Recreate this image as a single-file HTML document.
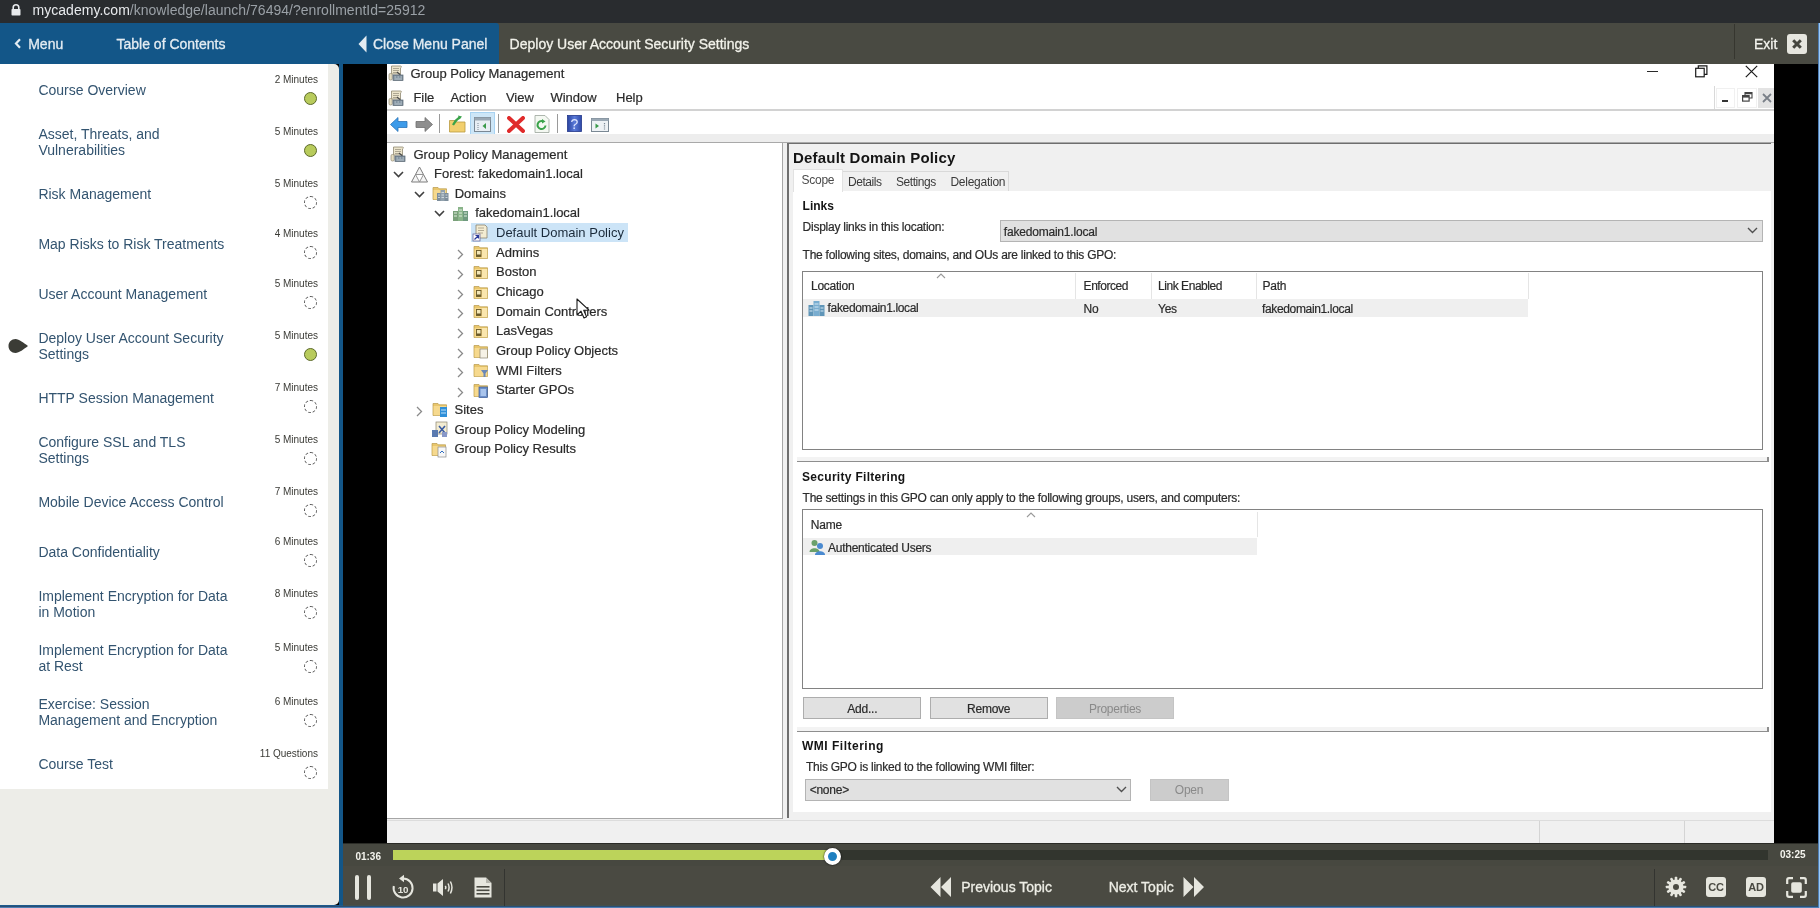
<!DOCTYPE html>
<html><head><meta charset="utf-8"><title>mycademy</title>
<style>
html,body{margin:0;padding:0;width:1820px;height:908px;overflow:hidden;background:#000;font-family:"Liberation Sans", sans-serif}
body{position:relative}
</style></head><body>
<div id="root" style="position:absolute;left:0;top:0;width:1820px;height:908px;overflow:hidden;will-change:transform">
<div style="position:absolute;left:0px;top:0px;width:1820px;height:23px;background:#292c2f"></div><svg style="position:absolute;left:11px;top:4px" width="10" height="12" viewBox="0 0 10 12"><path d="M2.2 5V3.6a2.8 2.8 0 0 1 5.6 0V5" fill="none" stroke="#e8eaed" stroke-width="1.6"/><rect x="0.5" y="5" width="9" height="6.5" rx="0.8" fill="#e8eaed"/></svg><div style="position:absolute;left:32.6px;top:2.65px;font-size:14px;line-height:14px;color:#e8eaed;font-weight:400;white-space:nowrap;letter-spacing:0.02px"><span style="color:#e8eaed">mycademy.com</span><span style="color:#9aa0a6">/knowledge/launch/76494/?enrollmentId=25912</span></div><div style="position:absolute;left:0px;top:23px;width:1818px;height:41px;background:#494a42"></div><div style="position:absolute;left:0px;top:23px;width:499px;height:41px;background:#135688;border-top-right-radius:3px"></div><div style="position:absolute;left:1818px;top:23px;width:1px;height:885px;background:#4f7fb6"></div><div style="position:absolute;left:1819px;top:23px;width:1px;height:885px;background:#9dcaf6"></div><svg style="position:absolute;left:14px;top:38px" width="8" height="11" viewBox="0 0 8 11"><path d="M6 1.2 L2 5.5 L6 9.8" fill="none" stroke="#e4ecf2" stroke-width="2.2"/></svg><div style="position:absolute;left:28.2px;top:36.95px;font-size:14px;line-height:14px;color:#e4ecf2;font-weight:400;white-space:nowrap;-webkit-text-stroke:0.3px currentColor">Menu</div><div style="position:absolute;left:116.5px;top:36.95px;font-size:14px;line-height:14px;color:#e4ecf2;font-weight:400;white-space:nowrap;-webkit-text-stroke:0.3px currentColor">Table of Contents</div><svg style="position:absolute;left:358px;top:35px" width="9" height="18" viewBox="0 0 9 18"><path d="M8.5 0.5 L0.5 9 L8.5 17.5 Z" fill="#e4ecf2"/></svg><div style="position:absolute;left:373px;top:36.95px;font-size:14px;line-height:14px;color:#e4ecf2;font-weight:400;white-space:nowrap;-webkit-text-stroke:0.3px currentColor">Close Menu Panel</div><div style="position:absolute;left:509.6px;top:36.95px;font-size:14px;line-height:14px;color:#f2f2ea;font-weight:400;white-space:nowrap;-webkit-text-stroke:0.3px currentColor">Deploy User Account Security Settings</div><div style="position:absolute;left:1734px;top:24px;width:1px;height:35px;background:#36362f"></div><div style="position:absolute;left:1754px;top:37.05px;font-size:14px;line-height:14px;color:#f4f4ee;font-weight:400;white-space:nowrap;-webkit-text-stroke:0.3px currentColor">Exit</div><div style="position:absolute;left:1787px;top:34px;width:20px;height:20px;background:#e6e6df;border-radius:3px"></div><svg style="position:absolute;left:1791px;top:38px" width="12" height="12" viewBox="0 0 12 12"><path d="M2.2 2.2 L9.8 9.8 M9.8 2.2 L2.2 9.8" stroke="#45463e" stroke-width="3" stroke-linecap="butt"/></svg><div style="position:absolute;left:0px;top:64px;width:339px;height:841px;background:#edede8;border-top-right-radius:5px;border-bottom-right-radius:5px"></div><div style="position:absolute;left:0px;top:64px;width:328px;height:725px;background:#ffffff"></div><div style="position:absolute;left:339px;top:64px;width:4px;height:844px;background:#135688"></div><div style="position:absolute;left:0px;top:905px;width:343px;height:1px;background:#1d5a8c"></div><div style="position:absolute;left:0px;top:906px;width:343px;height:1px;background:#2a4e74"></div><div style="position:absolute;left:0px;top:907px;width:343px;height:1px;background:#4e7fb3"></div><div style="position:absolute;right:1502px;top:75.14px;font-size:10px;line-height:10px;color:#3b3b36;white-space:nowrap">2 Minutes</div><div style="position:absolute;left:38.4px;top:82.95px;font-size:14px;line-height:14px;color:#335470;font-weight:400;white-space:nowrap;">Course Overview</div><div style="position:absolute;left:304px;top:92.0px;width:11px;height:11px;background:#b8cb5c;border:1px solid #5d6a2c;border-radius:50%"></div><div style="position:absolute;right:1502px;top:127.33px;font-size:10px;line-height:10px;color:#3b3b36;white-space:nowrap">5 Minutes</div><div style="position:absolute;left:38.4px;top:127.05px;font-size:14px;line-height:14px;color:#335470;font-weight:400;white-space:nowrap;">Asset, Threats, and</div><div style="position:absolute;left:38.4px;top:142.95px;font-size:14px;line-height:14px;color:#335470;font-weight:400;white-space:nowrap;">Vulnerabilities</div><div style="position:absolute;left:304px;top:144.2px;width:11px;height:11px;background:#b8cb5c;border:1px solid #5d6a2c;border-radius:50%"></div><div style="position:absolute;right:1502px;top:179.23px;font-size:10px;line-height:10px;color:#3b3b36;white-space:nowrap">5 Minutes</div><div style="position:absolute;left:38.4px;top:187.05px;font-size:14px;line-height:14px;color:#335470;font-weight:400;white-space:nowrap;">Risk Management</div><div style="position:absolute;left:304px;top:196.1px;width:11px;height:11px;border:1px dashed #555;border-radius:50%"></div><div style="position:absolute;right:1502px;top:229.33px;font-size:10px;line-height:10px;color:#3b3b36;white-space:nowrap">4 Minutes</div><div style="position:absolute;left:38.4px;top:237.15px;font-size:14px;line-height:14px;color:#335470;font-weight:400;white-space:nowrap;">Map Risks to Risk Treatments</div><div style="position:absolute;left:304px;top:246.2px;width:11px;height:11px;border:1px dashed #555;border-radius:50%"></div><div style="position:absolute;right:1502px;top:279.34px;font-size:10px;line-height:10px;color:#3b3b36;white-space:nowrap">5 Minutes</div><div style="position:absolute;left:38.4px;top:287.15px;font-size:14px;line-height:14px;color:#335470;font-weight:400;white-space:nowrap;">User Account Management</div><div style="position:absolute;left:304px;top:296.20000000000005px;width:11px;height:11px;border:1px dashed #555;border-radius:50%"></div><div style="position:absolute;right:1502px;top:331.34px;font-size:10px;line-height:10px;color:#3b3b36;white-space:nowrap">5 Minutes</div><div style="position:absolute;left:38.4px;top:331.05px;font-size:14px;line-height:14px;color:#335470;font-weight:400;white-space:nowrap;">Deploy User Account Security</div><div style="position:absolute;left:38.4px;top:346.95px;font-size:14px;line-height:14px;color:#335470;font-weight:400;white-space:nowrap;">Settings</div><div style="position:absolute;left:304px;top:348.20000000000005px;width:11px;height:11px;background:#b8cb5c;border:1px solid #5d6a2c;border-radius:50%"></div><div style="position:absolute;right:1502px;top:383.44px;font-size:10px;line-height:10px;color:#3b3b36;white-space:nowrap">7 Minutes</div><div style="position:absolute;left:38.4px;top:391.25px;font-size:14px;line-height:14px;color:#335470;font-weight:400;white-space:nowrap;">HTTP Session Management</div><div style="position:absolute;left:304px;top:400.3px;width:11px;height:11px;border:1px dashed #555;border-radius:50%"></div><div style="position:absolute;right:1502px;top:435.13px;font-size:10px;line-height:10px;color:#3b3b36;white-space:nowrap">5 Minutes</div><div style="position:absolute;left:38.4px;top:434.85px;font-size:14px;line-height:14px;color:#335470;font-weight:400;white-space:nowrap;">Configure SSL and TLS</div><div style="position:absolute;left:38.4px;top:450.75px;font-size:14px;line-height:14px;color:#335470;font-weight:400;white-space:nowrap;">Settings</div><div style="position:absolute;left:304px;top:452.0px;width:11px;height:11px;border:1px dashed #555;border-radius:50%"></div><div style="position:absolute;right:1502px;top:487.04px;font-size:10px;line-height:10px;color:#3b3b36;white-space:nowrap">7 Minutes</div><div style="position:absolute;left:38.4px;top:494.85px;font-size:14px;line-height:14px;color:#335470;font-weight:400;white-space:nowrap;">Mobile Device Access Control</div><div style="position:absolute;left:304px;top:503.90000000000003px;width:11px;height:11px;border:1px dashed #555;border-radius:50%"></div><div style="position:absolute;right:1502px;top:537.34px;font-size:10px;line-height:10px;color:#3b3b36;white-space:nowrap">6 Minutes</div><div style="position:absolute;left:38.4px;top:545.15px;font-size:14px;line-height:14px;color:#335470;font-weight:400;white-space:nowrap;">Data Confidentiality</div><div style="position:absolute;left:304px;top:554.2px;width:11px;height:11px;border:1px dashed #555;border-radius:50%"></div><div style="position:absolute;right:1502px;top:589.34px;font-size:10px;line-height:10px;color:#3b3b36;white-space:nowrap">8 Minutes</div><div style="position:absolute;left:38.4px;top:589.05px;font-size:14px;line-height:14px;color:#335470;font-weight:400;white-space:nowrap;">Implement Encryption for Data</div><div style="position:absolute;left:38.4px;top:604.95px;font-size:14px;line-height:14px;color:#335470;font-weight:400;white-space:nowrap;">in Motion</div><div style="position:absolute;left:304px;top:606.2px;width:11px;height:11px;border:1px dashed #555;border-radius:50%"></div><div style="position:absolute;right:1502px;top:643.24px;font-size:10px;line-height:10px;color:#3b3b36;white-space:nowrap">5 Minutes</div><div style="position:absolute;left:38.4px;top:642.95px;font-size:14px;line-height:14px;color:#335470;font-weight:400;white-space:nowrap;">Implement Encryption for Data</div><div style="position:absolute;left:38.4px;top:658.85px;font-size:14px;line-height:14px;color:#335470;font-weight:400;white-space:nowrap;">at Rest</div><div style="position:absolute;left:304px;top:660.1px;width:11px;height:11px;border:1px dashed #555;border-radius:50%"></div><div style="position:absolute;right:1502px;top:697.24px;font-size:10px;line-height:10px;color:#3b3b36;white-space:nowrap">6 Minutes</div><div style="position:absolute;left:38.4px;top:696.95px;font-size:14px;line-height:14px;color:#335470;font-weight:400;white-space:nowrap;">Exercise: Session</div><div style="position:absolute;left:38.4px;top:712.85px;font-size:14px;line-height:14px;color:#335470;font-weight:400;white-space:nowrap;">Management and Encryption</div><div style="position:absolute;left:304px;top:714.1px;width:11px;height:11px;border:1px dashed #555;border-radius:50%"></div><div style="position:absolute;right:1502px;top:749.24px;font-size:10px;line-height:10px;color:#3b3b36;white-space:nowrap">11 Questions</div><div style="position:absolute;left:38.4px;top:757.05px;font-size:14px;line-height:14px;color:#335470;font-weight:400;white-space:nowrap;">Course Test</div><div style="position:absolute;left:304px;top:766.1px;width:11px;height:11px;border:1px dashed #555;border-radius:50%"></div><svg style="position:absolute;left:8px;top:338px" width="21" height="16" viewBox="0 0 21 16"><path d="M7.5 1 C3.5 1 0.5 4 0.5 8 C0.5 12 3.5 15 7.5 15 C11 15 16 11 20 8 C16 5 11 1 7.5 1 Z" fill="#3b3c36"/></svg><div style="position:absolute;left:343px;top:64px;width:1475px;height:779px;background:#000"></div><div style="position:absolute;left:387px;top:64px;width:1387px;height:779px;background:#ffffff"></div><svg style="position:absolute;left:388px;top:65px" width="16" height="16" viewBox="0 0 16 16"><path d="M3.5 1 H12.5 C13.5 1 13.8 2 13 2.6 L12.5 3 V9 H3.5 Z" fill="#ece5cc" stroke="#8f8872" stroke-width="0.8"/><path d="M5 3.5 H11 M5 5.5 H11 M5 7.5 H10" stroke="#9d9683" stroke-width="0.8"/><rect x="1" y="8.5" width="3.2" height="6.5" rx="1.3" fill="#e6dec2" stroke="#8f8872" stroke-width="0.7"/><path d="M9 7 L12.5 10" stroke="#4a4a4a" stroke-width="1.3"/><rect x="5" y="10" width="10" height="5.5" fill="#8393a0" stroke="#55636e" stroke-width="0.7"/><path d="M6.5 12 H8 M9.5 12 H11 M12.5 12 H14 M6.5 14 H14" stroke="#c9d3da" stroke-width="0.8"/></svg><div style="position:absolute;left:410.5px;top:66.90px;font-size:13px;line-height:13px;color:#2b2b2b;font-weight:400;white-space:nowrap;;-webkit-text-stroke:0.2px currentColor">Group Policy Management</div><div style="position:absolute;left:1647px;top:71px;width:11px;height:1.3px;background:#2a2a2a"></div><svg style="position:absolute;left:1695px;top:65px" width="13" height="13" viewBox="0 0 13 13"><rect x="0.7" y="3.3" width="8.5" height="8.5" fill="none" stroke="#1a1a1a" stroke-width="1.2"/><path d="M3.3 3.3 V0.8 H11.9 V9.3 H9.2" fill="none" stroke="#1a1a1a" stroke-width="1.2"/></svg><svg style="position:absolute;left:1745px;top:65px" width="13" height="13" viewBox="0 0 13 13"><path d="M0.8 0.8 L12.2 12.2 M12.2 0.8 L0.8 12.2" stroke="#1a1a1a" stroke-width="1.2"/></svg><svg style="position:absolute;left:388px;top:90px" width="16" height="16" viewBox="0 0 16 16"><path d="M3.5 1 H12.5 C13.5 1 13.8 2 13 2.6 L12.5 3 V9 H3.5 Z" fill="#ece5cc" stroke="#8f8872" stroke-width="0.8"/><path d="M5 3.5 H11 M5 5.5 H11 M5 7.5 H10" stroke="#9d9683" stroke-width="0.8"/><rect x="1" y="8.5" width="3.2" height="6.5" rx="1.3" fill="#e6dec2" stroke="#8f8872" stroke-width="0.7"/><path d="M9 7 L12.5 10" stroke="#4a4a4a" stroke-width="1.3"/><rect x="5" y="10" width="10" height="5.5" fill="#8393a0" stroke="#55636e" stroke-width="0.7"/><path d="M6.5 12 H8 M9.5 12 H11 M12.5 12 H14 M6.5 14 H14" stroke="#c9d3da" stroke-width="0.8"/></svg><div style="position:absolute;left:413.4px;top:90.60px;font-size:13px;line-height:13px;color:#2b2b2b;font-weight:400;white-space:nowrap;;-webkit-text-stroke:0.2px currentColor">File</div><div style="position:absolute;left:450.4px;top:90.60px;font-size:13px;line-height:13px;color:#2b2b2b;font-weight:400;white-space:nowrap;;-webkit-text-stroke:0.2px currentColor">Action</div><div style="position:absolute;left:505.9px;top:90.60px;font-size:13px;line-height:13px;color:#2b2b2b;font-weight:400;white-space:nowrap;;-webkit-text-stroke:0.2px currentColor">View</div><div style="position:absolute;left:550.4px;top:90.60px;font-size:13px;line-height:13px;color:#2b2b2b;font-weight:400;white-space:nowrap;;-webkit-text-stroke:0.2px currentColor">Window</div><div style="position:absolute;left:616px;top:90.60px;font-size:13px;line-height:13px;color:#2b2b2b;font-weight:400;white-space:nowrap;;-webkit-text-stroke:0.2px currentColor">Help</div><div style="position:absolute;left:1714px;top:86px;width:1px;height:24px;background:#d9d9d9"></div><div style="position:absolute;left:1716px;top:88px;width:19px;height:20px;background:#ffffff;border:1px solid #f0f0f0;box-sizing:border-box"></div><div style="position:absolute;left:1722px;top:100px;width:6px;height:2px;background:#333"></div><div style="position:absolute;left:1737px;top:88px;width:20px;height:20px;background:#ffffff;border:1px solid #f0f0f0;box-sizing:border-box"></div><svg style="position:absolute;left:1742px;top:92px" width="11" height="10" viewBox="0 0 11 10"><rect x="0.6" y="3.6" width="6.5" height="5.5" fill="none" stroke="#444" stroke-width="1.2"/><path d="M0.6 4.8 H7.1" stroke="#444" stroke-width="1.6"/><path d="M3 3.6 V0.6 H10 V6 H7.1 M3 1.8 H10" fill="none" stroke="#444" stroke-width="1.1"/></svg><div style="position:absolute;left:1758px;top:88px;width:16px;height:20px;background:#e3e3e3"></div><svg style="position:absolute;left:1762px;top:93px" width="10" height="10" viewBox="0 0 10 10"><path d="M1 1 L9 9 M9 1 L1 9" stroke="#7a8088" stroke-width="1.8"/></svg><div style="position:absolute;left:387px;top:109px;width:1387px;height:2px;background:#d2d2d2"></div><div style="position:absolute;left:387px;top:111px;width:1387px;height:23px;background:#ffffff"></div><svg style="position:absolute;left:390px;top:116px" width="18" height="17" viewBox="0 0 18 17"><path d="M0.5 8.5 L8 1.5 V5.5 H17 V11.5 H8 V15.5 Z" fill="#3d9be9" stroke="#2a74b8" stroke-width="0.8"/></svg><svg style="position:absolute;left:414px;top:116px" width="19" height="17" viewBox="0 0 19 17"><path d="M18.5 8.5 L11 1.5 V5.5 H2 V11.5 H11 V15.5 Z" fill="#8e8e8e" stroke="#707070" stroke-width="0.8"/></svg><div style="position:absolute;left:439px;top:114px;width:1px;height:19px;background:#9a9a9a"></div><svg style="position:absolute;left:449px;top:115px" width="17" height="18" viewBox="0 0 17 18"><path d="M0.5 5.5 H6 L7.5 7 H16 V17 H0.5 Z" fill="#f2cf6e" stroke="#b99a40" stroke-width="0.8"/><path d="M4 10 C6 6 8 4 11 2" fill="none" stroke="#3aa34a" stroke-width="2.2"/><path d="M9 0.5 L13 1.5 L10.5 4.5 Z" fill="#3aa34a"/></svg><div style="position:absolute;left:470px;top:112px;width:25px;height:23px;background:#cde6f7;border:1px solid #a8d3f2;box-sizing:border-box"></div><svg style="position:absolute;left:474px;top:117px" width="17" height="15" viewBox="0 0 17 15"><rect x="0.5" y="0.5" width="16" height="14" fill="#e8eef4" stroke="#7a8894" stroke-width="1"/><rect x="0.5" y="0.5" width="16" height="3" fill="#9aa8b4"/><path d="M4 6 V13" stroke="#7a8894" stroke-width="1" stroke-dasharray="1 1"/><path d="M12 6 L8.5 9 L12 12 Z" fill="#3a9a4a"/></svg><div style="position:absolute;left:498px;top:114px;width:1px;height:19px;background:#9a9a9a"></div><svg style="position:absolute;left:507px;top:116px" width="18" height="17" viewBox="0 0 18 17"><path d="M2 2 L16 15 M16 2 L2 15" stroke="#e02a2a" stroke-width="4" stroke-linecap="round"/></svg><svg style="position:absolute;left:534px;top:115px" width="16" height="18" viewBox="0 0 16 18"><path d="M1 0.5 H11 L15 4.5 V17.5 H1 Z" fill="#f4f8f2" stroke="#9aa59a" stroke-width="0.8"/><path d="M11.5 10.5 A4 4 0 1 1 9 6.3" fill="none" stroke="#3aa34a" stroke-width="2"/><path d="M8 4 L11.5 6.5 L8 8.5 Z" fill="#3aa34a"/></svg><div style="position:absolute;left:557px;top:114px;width:1px;height:19px;background:#9a9a9a"></div><svg style="position:absolute;left:567px;top:115px" width="15" height="17" viewBox="0 0 15 17"><defs><linearGradient id="hg" x1="0" y1="0" x2="1" y2="0"><stop offset="0" stop-color="#2a44a0"/><stop offset="0.5" stop-color="#5a7ad8"/><stop offset="1" stop-color="#2f4aa8"/></linearGradient></defs><rect x="0.5" y="0.5" width="14" height="16" fill="url(#hg)" stroke="#22378a" stroke-width="0.8"/><text x="7.5" y="13.5" font-family="Liberation Sans" font-size="14" fill="#dfe6ff" text-anchor="middle">?</text></svg><svg style="position:absolute;left:591px;top:118px" width="18" height="14" viewBox="0 0 18 14"><rect x="0.5" y="0.5" width="17" height="13" fill="#eef2f5" stroke="#7a8894" stroke-width="1"/><rect x="0.5" y="0.5" width="17" height="2.5" fill="#9aa8b4"/><path d="M4.5 5.5 L8 8 L4.5 10.5 Z" fill="#3a9a4a"/><path d="M13.5 5 V12" stroke="#7a8894" stroke-width="1.2" stroke-dasharray="1.2 1"/></svg><div style="position:absolute;left:387px;top:134px;width:1387px;height:8px;background:#ededed"></div><div style="position:absolute;left:387px;top:142px;width:1387px;height:1.5px;background:#a9a9a9"></div><div style="position:absolute;left:387px;top:143px;width:1387px;height:700px;background:#f0f0f0"></div><div style="position:absolute;left:387px;top:143px;width:396px;height:676px;background:#ffffff;border-right:1px solid #a6a6a6;border-bottom:1px solid #a6a6a6;box-sizing:border-box"></div><div style="position:absolute;left:787px;top:143px;width:984px;height:675px;background:#f0f0f0;border-left:2px solid #6e6e6e;border-top:1.5px solid #6e6e6e;box-sizing:border-box"></div><div style="position:absolute;left:793px;top:191px;width:978px;height:621px;background:#ffffff"></div><div style="position:absolute;left:387px;top:819.5px;width:1387px;height:1px;background:#dcdcdc"></div><div style="position:absolute;left:1538.5px;top:821px;width:1px;height:22px;background:#d4d4d4"></div><div style="position:absolute;left:1683.5px;top:821px;width:1px;height:22px;background:#d4d4d4"></div><div style="position:absolute;left:387px;top:843px;width:1387px;height:1px;background:#1a1a1a"></div><div style="position:absolute;left:470.6px;top:223.3px;width:157.7px;height:18.7px;background:#cce4f7"></div><svg style="position:absolute;left:390.4px;top:146.0px" width="17" height="17" viewBox="0 0 17 17"><path d="M3.5 1 H12.5 C13.5 1 13.8 2 13 2.6 L12.5 3 V9 H3.5 Z" fill="#ece5cc" stroke="#8f8872" stroke-width="0.8"/><path d="M5 3.5 H11 M5 5.5 H11 M5 7.5 H10" stroke="#9d9683" stroke-width="0.8"/><rect x="1" y="8.5" width="3.2" height="6.5" rx="1.3" fill="#e6dec2" stroke="#8f8872" stroke-width="0.7"/><path d="M9 7 L12.5 10" stroke="#4a4a4a" stroke-width="1.3"/><rect x="5" y="10" width="10" height="5.5" fill="#8393a0" stroke="#55636e" stroke-width="0.7"/><path d="M6.5 12 H8 M9.5 12 H11 M12.5 12 H14 M6.5 14 H14" stroke="#c9d3da" stroke-width="0.8"/></svg><div style="position:absolute;left:413.5px;top:147.50px;font-size:13px;line-height:13px;color:#2b2b2b;font-weight:400;white-space:nowrap;;-webkit-text-stroke:0.2px currentColor">Group Policy Management</div><svg style="position:absolute;left:393px;top:171.15px" width="11" height="7" viewBox="0 0 11 7"><path d="M1 1 L5.5 5.5 L10 1" fill="none" stroke="#404040" stroke-width="1.6"/></svg><svg style="position:absolute;left:411px;top:165.65px" width="17" height="17" viewBox="0 0 17 17"><path d="M8.5 1 L16.5 16 H0.5 Z" fill="#f4f4f4" stroke="#7c7c7c" stroke-width="1"/><path d="M4.5 8.5 H12.5 L8.5 16 Z" fill="#ffffff" stroke="#8a8a8a" stroke-width="0.9"/></svg><div style="position:absolute;left:434px;top:167.15px;font-size:13px;line-height:13px;color:#2b2b2b;font-weight:400;white-space:nowrap;;-webkit-text-stroke:0.2px currentColor">Forest: fakedomain1.local</div><svg style="position:absolute;left:413.7px;top:190.8px" width="11" height="7" viewBox="0 0 11 7"><path d="M1 1 L5.5 5.5 L10 1" fill="none" stroke="#404040" stroke-width="1.6"/></svg><svg style="position:absolute;left:431.5px;top:185.3px" width="17" height="17" viewBox="0 0 17 17"><path d="M1 2.5 H6 L7.2 3.8 H14.5 V14.5 H1 Z" fill="#e9c66c" stroke="#b89a4a" stroke-width="0.7"/><rect x="1.6" y="5" width="12.6" height="9.2" fill="#f6d98e"/><rect x="5" y="8" width="4" height="8" fill="#7d8e9c"/><rect x="8.5" y="5" width="4.5" height="11" fill="#92a2ae"/><rect x="12.5" y="8" width="4" height="8" fill="#7d8e9c"/><path d="M6 10 H8 M6 12.5 H8 M9.5 7.5 H12 M9.5 10 H12 M9.5 12.5 H12 M13.5 10 H15.5 M13.5 12.5 H15.5" stroke="#d3dce2" stroke-width="0.9"/></svg><div style="position:absolute;left:454.7px;top:186.80px;font-size:13px;line-height:13px;color:#2b2b2b;font-weight:400;white-space:nowrap;;-webkit-text-stroke:0.2px currentColor">Domains</div><svg style="position:absolute;left:434.2px;top:210.45px" width="11" height="7" viewBox="0 0 11 7"><path d="M1 1 L5.5 5.5 L10 1" fill="none" stroke="#404040" stroke-width="1.6"/></svg><svg style="position:absolute;left:452px;top:204.95px" width="17" height="17" viewBox="0 0 17 17"><rect x="1" y="6" width="5" height="10" fill="#7aa07a"/><rect x="6" y="2" width="5" height="14" fill="#8ab48a"/><rect x="11" y="6" width="5" height="10" fill="#6f9a7f"/><path d="M2 8 H5 M2 11 H5 M7 5 H10 M7 8 H10 M7 11 H10 M12 8 H15 M12 11 H15" stroke="#dfeede" stroke-width="1"/></svg><div style="position:absolute;left:475.2px;top:206.45px;font-size:13px;line-height:13px;color:#2b2b2b;font-weight:400;white-space:nowrap;;-webkit-text-stroke:0.2px currentColor">fakedomain1.local</div><svg style="position:absolute;left:472px;top:223.6px" width="17" height="18" viewBox="0 0 17 18"><path d="M4 1 H13 L15 3 V14 H4 Z" fill="#f3ecd2" stroke="#8a8470" stroke-width="0.8"/><path d="M6 4 H12 M6 6.5 H12 M6 9 H11" stroke="#a29a84" stroke-width="0.8"/><rect x="1" y="10" width="7" height="7" fill="#ffffff" stroke="#6a6aa0" stroke-width="0.8"/><path d="M2.5 15.5 L6.5 11.5 M3.5 11.5 H6.5 V14.5" fill="none" stroke="#2a3a9a" stroke-width="1.2"/></svg><div style="position:absolute;left:496px;top:226.10px;font-size:13px;line-height:13px;color:#1a2a3a;font-weight:400;white-space:nowrap;">Default Domain Policy</div><svg style="position:absolute;left:457px;top:249.25px" width="7" height="11" viewBox="0 0 7 11"><path d="M1 1 L5.5 5.5 L1 10" fill="none" stroke="#8a8a8a" stroke-width="1.3"/></svg><svg style="position:absolute;left:473px;top:244.25px" width="17" height="17" viewBox="0 0 17 17"><path d="M1 2.5 H6 L7.2 3.8 H14.5 V14.5 H1 Z" fill="#e9c66c" stroke="#b89a4a" stroke-width="0.7"/><rect x="1.6" y="5" width="12.6" height="9.2" fill="#f6d98e"/><rect x="9" y="5" width="5" height="9" fill="#fae6ae"/><rect x="3.5" y="6.5" width="4.5" height="6" fill="#f3e7b8" stroke="#6b5a28" stroke-width="0.9"/><rect x="3.5" y="10.5" width="4.5" height="2" fill="#6b5a28"/></svg><div style="position:absolute;left:496px;top:245.75px;font-size:13px;line-height:13px;color:#2b2b2b;font-weight:400;white-space:nowrap;;-webkit-text-stroke:0.2px currentColor">Admins</div><svg style="position:absolute;left:457px;top:268.9px" width="7" height="11" viewBox="0 0 7 11"><path d="M1 1 L5.5 5.5 L1 10" fill="none" stroke="#8a8a8a" stroke-width="1.3"/></svg><svg style="position:absolute;left:473px;top:263.9px" width="17" height="17" viewBox="0 0 17 17"><path d="M1 2.5 H6 L7.2 3.8 H14.5 V14.5 H1 Z" fill="#e9c66c" stroke="#b89a4a" stroke-width="0.7"/><rect x="1.6" y="5" width="12.6" height="9.2" fill="#f6d98e"/><rect x="9" y="5" width="5" height="9" fill="#fae6ae"/><rect x="3.5" y="6.5" width="4.5" height="6" fill="#f3e7b8" stroke="#6b5a28" stroke-width="0.9"/><rect x="3.5" y="10.5" width="4.5" height="2" fill="#6b5a28"/></svg><div style="position:absolute;left:496px;top:265.40px;font-size:13px;line-height:13px;color:#2b2b2b;font-weight:400;white-space:nowrap;;-webkit-text-stroke:0.2px currentColor">Boston</div><svg style="position:absolute;left:457px;top:288.54999999999995px" width="7" height="11" viewBox="0 0 7 11"><path d="M1 1 L5.5 5.5 L1 10" fill="none" stroke="#8a8a8a" stroke-width="1.3"/></svg><svg style="position:absolute;left:473px;top:283.54999999999995px" width="17" height="17" viewBox="0 0 17 17"><path d="M1 2.5 H6 L7.2 3.8 H14.5 V14.5 H1 Z" fill="#e9c66c" stroke="#b89a4a" stroke-width="0.7"/><rect x="1.6" y="5" width="12.6" height="9.2" fill="#f6d98e"/><rect x="9" y="5" width="5" height="9" fill="#fae6ae"/><rect x="3.5" y="6.5" width="4.5" height="6" fill="#f3e7b8" stroke="#6b5a28" stroke-width="0.9"/><rect x="3.5" y="10.5" width="4.5" height="2" fill="#6b5a28"/></svg><div style="position:absolute;left:496px;top:285.05px;font-size:13px;line-height:13px;color:#2b2b2b;font-weight:400;white-space:nowrap;;-webkit-text-stroke:0.2px currentColor">Chicago</div><svg style="position:absolute;left:457px;top:308.2px" width="7" height="11" viewBox="0 0 7 11"><path d="M1 1 L5.5 5.5 L1 10" fill="none" stroke="#8a8a8a" stroke-width="1.3"/></svg><svg style="position:absolute;left:473px;top:303.2px" width="17" height="17" viewBox="0 0 17 17"><path d="M1 2.5 H6 L7.2 3.8 H14.5 V14.5 H1 Z" fill="#e9c66c" stroke="#b89a4a" stroke-width="0.7"/><rect x="1.6" y="5" width="12.6" height="9.2" fill="#f6d98e"/><rect x="9" y="5" width="5" height="9" fill="#fae6ae"/><rect x="3.5" y="6.5" width="4.5" height="6" fill="#f3e7b8" stroke="#6b5a28" stroke-width="0.9"/><rect x="3.5" y="10.5" width="4.5" height="2" fill="#6b5a28"/></svg><div style="position:absolute;left:496px;top:304.70px;font-size:13px;line-height:13px;color:#2b2b2b;font-weight:400;white-space:nowrap;;-webkit-text-stroke:0.2px currentColor">Domain Controllers</div><svg style="position:absolute;left:457px;top:327.85px" width="7" height="11" viewBox="0 0 7 11"><path d="M1 1 L5.5 5.5 L1 10" fill="none" stroke="#8a8a8a" stroke-width="1.3"/></svg><svg style="position:absolute;left:473px;top:322.85px" width="17" height="17" viewBox="0 0 17 17"><path d="M1 2.5 H6 L7.2 3.8 H14.5 V14.5 H1 Z" fill="#e9c66c" stroke="#b89a4a" stroke-width="0.7"/><rect x="1.6" y="5" width="12.6" height="9.2" fill="#f6d98e"/><rect x="9" y="5" width="5" height="9" fill="#fae6ae"/><rect x="3.5" y="6.5" width="4.5" height="6" fill="#f3e7b8" stroke="#6b5a28" stroke-width="0.9"/><rect x="3.5" y="10.5" width="4.5" height="2" fill="#6b5a28"/></svg><div style="position:absolute;left:496px;top:324.35px;font-size:13px;line-height:13px;color:#2b2b2b;font-weight:400;white-space:nowrap;;-webkit-text-stroke:0.2px currentColor">LasVegas</div><svg style="position:absolute;left:457px;top:347.5px" width="7" height="11" viewBox="0 0 7 11"><path d="M1 1 L5.5 5.5 L1 10" fill="none" stroke="#8a8a8a" stroke-width="1.3"/></svg><svg style="position:absolute;left:473px;top:342.5px" width="17" height="17" viewBox="0 0 17 17"><path d="M1 2.5 H6 L7.2 3.8 H14.5 V14.5 H1 Z" fill="#e9c66c" stroke="#b89a4a" stroke-width="0.7"/><rect x="1.6" y="5" width="12.6" height="9.2" fill="#f6d98e"/><rect x="7" y="6" width="7.5" height="9" fill="#f6f2e6" stroke="#8a8470" stroke-width="0.7"/></svg><div style="position:absolute;left:496px;top:344.00px;font-size:13px;line-height:13px;color:#2b2b2b;font-weight:400;white-space:nowrap;;-webkit-text-stroke:0.2px currentColor">Group Policy Objects</div><svg style="position:absolute;left:457px;top:367.15px" width="7" height="11" viewBox="0 0 7 11"><path d="M1 1 L5.5 5.5 L1 10" fill="none" stroke="#8a8a8a" stroke-width="1.3"/></svg><svg style="position:absolute;left:473px;top:362.15px" width="17" height="17" viewBox="0 0 17 17"><path d="M1 2.5 H6 L7.2 3.8 H14.5 V14.5 H1 Z" fill="#e9c66c" stroke="#b89a4a" stroke-width="0.7"/><rect x="1.6" y="5" width="12.6" height="9.2" fill="#f6d98e"/><path d="M8 8 H15 L12.5 11.5 V15 H10.5 V11.5 Z" fill="#6a88b8"/></svg><div style="position:absolute;left:496px;top:363.65px;font-size:13px;line-height:13px;color:#2b2b2b;font-weight:400;white-space:nowrap;;-webkit-text-stroke:0.2px currentColor">WMI Filters</div><svg style="position:absolute;left:457px;top:386.79999999999995px" width="7" height="11" viewBox="0 0 7 11"><path d="M1 1 L5.5 5.5 L1 10" fill="none" stroke="#8a8a8a" stroke-width="1.3"/></svg><svg style="position:absolute;left:473px;top:381.79999999999995px" width="17" height="17" viewBox="0 0 17 17"><path d="M1 2.5 H6 L7.2 3.8 H14.5 V14.5 H1 Z" fill="#e9c66c" stroke="#b89a4a" stroke-width="0.7"/><rect x="1.6" y="5" width="12.6" height="9.2" fill="#f6d98e"/><rect x="6" y="5" width="8.5" height="10.5" fill="#6a8ec8" stroke="#3a5a98" stroke-width="0.7"/><rect x="7.5" y="7" width="5.5" height="7" fill="#a9c4ec"/></svg><div style="position:absolute;left:496px;top:383.30px;font-size:13px;line-height:13px;color:#2b2b2b;font-weight:400;white-space:nowrap;;-webkit-text-stroke:0.2px currentColor">Starter GPOs</div><svg style="position:absolute;left:415.5px;top:406.45px" width="7" height="11" viewBox="0 0 7 11"><path d="M1 1 L5.5 5.5 L1 10" fill="none" stroke="#8a8a8a" stroke-width="1.3"/></svg><svg style="position:absolute;left:431.5px;top:401.45px" width="18" height="17" viewBox="0 0 18 17"><path d="M1 2.5 H6 L7.2 3.8 H14.5 V14.5 H1 Z" fill="#e9c66c" stroke="#b89a4a" stroke-width="0.7"/><rect x="1.6" y="5" width="12.6" height="9.2" fill="#f6d98e"/><rect x="8" y="6" width="7" height="10" fill="#2f8fd8"/><path d="M9 9 H14 M9 12 H14" stroke="#bfe0f8" stroke-width="1"/></svg><div style="position:absolute;left:454.5px;top:402.95px;font-size:13px;line-height:13px;color:#2b2b2b;font-weight:400;white-space:nowrap;;-webkit-text-stroke:0.2px currentColor">Sites</div><svg style="position:absolute;left:431px;top:421.09999999999997px" width="18" height="17" viewBox="0 0 18 17"><rect x="5" y="1" width="11" height="12" fill="#f3ecd2" stroke="#8a8470" stroke-width="0.7"/><rect x="1" y="9" width="6" height="7" fill="#5a7ab0"/><path d="M8 5 L14 12 M14 5 L8 12" stroke="#3a5aa0" stroke-width="1.6"/><rect x="11" y="11" width="5" height="5" fill="#8898c8"/></svg><div style="position:absolute;left:454.5px;top:422.60px;font-size:13px;line-height:13px;color:#2b2b2b;font-weight:400;white-space:nowrap;;-webkit-text-stroke:0.2px currentColor">Group Policy Modeling</div><svg style="position:absolute;left:431px;top:440.75px" width="18" height="17" viewBox="0 0 18 17"><path d="M1 2.5 H6 L7.2 3.8 H14.5 V14.5 H1 Z" fill="#e9c66c" stroke="#b89a4a" stroke-width="0.7"/><rect x="1.6" y="5" width="12.6" height="9.2" fill="#f6d98e"/><rect x="7" y="6" width="8" height="10" fill="#f7f7f7" stroke="#8a8a8a" stroke-width="0.7"/><path d="M9 12 L11 10 L13 12" fill="none" stroke="#2a6ac0" stroke-width="1"/></svg><div style="position:absolute;left:454.5px;top:442.25px;font-size:13px;line-height:13px;color:#2b2b2b;font-weight:400;white-space:nowrap;;-webkit-text-stroke:0.2px currentColor">Group Policy Results</div><svg style="position:absolute;left:576px;top:298px" width="14" height="22" viewBox="0 0 14 22"><path d="M1 1 V17 L5 13.2 L8 20 L10.6 18.8 L7.7 12.2 H13 Z" fill="#ffffff" stroke="#1a1a1a" stroke-width="1.1" stroke-linejoin="round"/></svg><div style="position:absolute;left:793px;top:149.50px;font-size:15px;line-height:15px;color:#141414;font-weight:700;white-space:nowrap;letter-spacing:0.2px">Default Domain Policy</div><div style="position:absolute;left:842px;top:170.5px;width:46.5px;height:20.5px;background:#f0f0f0;border:1px solid #d9d9d9;border-bottom:none;box-sizing:border-box"></div><div style="position:absolute;left:888px;top:170.5px;width:55.5px;height:20.5px;background:#f0f0f0;border:1px solid #d9d9d9;border-left:none;border-bottom:none;box-sizing:border-box"></div><div style="position:absolute;left:943px;top:170.5px;width:66px;height:20.5px;background:#f0f0f0;border:1px solid #d9d9d9;border-left:none;border-bottom:none;box-sizing:border-box"></div><div style="position:absolute;left:792.5px;top:168.5px;width:50px;height:23px;background:#ffffff;border:1px solid #e2e2e2;border-bottom:none;box-sizing:border-box"></div><div style="position:absolute;left:801.5px;top:173.54px;font-size:12px;line-height:12px;color:#4a4a4a;font-weight:400;white-space:nowrap;letter-spacing:-0.25px">Scope</div><div style="position:absolute;left:848px;top:175.64px;font-size:12px;line-height:12px;color:#3a3a3a;font-weight:400;white-space:nowrap;letter-spacing:-0.45px">Details</div><div style="position:absolute;left:896px;top:175.64px;font-size:12px;line-height:12px;color:#3a3a3a;font-weight:400;white-space:nowrap;letter-spacing:-0.45px">Settings</div><div style="position:absolute;left:950.4px;top:175.64px;font-size:12px;line-height:12px;color:#3a3a3a;font-weight:400;white-space:nowrap;letter-spacing:-0.25px">Delegation</div><div style="position:absolute;left:802.6px;top:199.74px;font-size:12px;line-height:12px;color:#141414;font-weight:700;white-space:nowrap;">Links</div><div style="position:absolute;left:802.6px;top:221.44px;font-size:12px;line-height:12px;color:#2b2b2b;font-weight:400;white-space:nowrap;letter-spacing:-0.25px;-webkit-text-stroke:0.2px currentColor">Display links in this location:</div><div style="position:absolute;left:1000px;top:220px;width:763px;height:22.4px;background:#e1e1e1;border:1px solid #b4b4b4;box-sizing:border-box"></div><div style="position:absolute;left:1003.8px;top:225.64px;font-size:12px;line-height:12px;color:#2b2b2b;font-weight:400;white-space:nowrap;letter-spacing:-0.2px;-webkit-text-stroke:0.2px currentColor">fakedomain1.local</div><svg style="position:absolute;left:1747px;top:227px" width="11" height="7" viewBox="0 0 11 7"><path d="M1 1 L5.5 5.5 L10 1" fill="none" stroke="#505050" stroke-width="1.4"/></svg><div style="position:absolute;left:802.6px;top:249.34px;font-size:12px;line-height:12px;color:#2b2b2b;font-weight:400;white-space:nowrap;letter-spacing:-0.25px;-webkit-text-stroke:0.2px currentColor">The following sites, domains, and OUs are linked to this GPO:</div><div style="position:absolute;left:802px;top:271.4px;width:961px;height:178.3px;background:#ffffff;border:1px solid #828282;box-sizing:border-box"></div><div style="position:absolute;left:1075.4px;top:273px;width:1px;height:26px;background:#e5e5e5"></div><div style="position:absolute;left:1151.4px;top:273px;width:1px;height:26px;background:#e5e5e5"></div><div style="position:absolute;left:1255.7px;top:273px;width:1px;height:26px;background:#e5e5e5"></div><div style="position:absolute;left:1528px;top:273px;width:1px;height:26px;background:#e5e5e5"></div><svg style="position:absolute;left:936px;top:273px" width="10" height="6" viewBox="0 0 10 6"><path d="M1 5 L5 1 L9 5" fill="none" stroke="#9a9a9a" stroke-width="1.1"/></svg><div style="position:absolute;left:811px;top:280.24px;font-size:12px;line-height:12px;color:#2b2b2b;font-weight:400;white-space:nowrap;letter-spacing:-0.25px;-webkit-text-stroke:0.2px currentColor">Location</div><div style="position:absolute;left:1083.6px;top:279.94px;font-size:12px;line-height:12px;color:#2b2b2b;font-weight:400;white-space:nowrap;letter-spacing:-0.45px;-webkit-text-stroke:0.2px currentColor">Enforced</div><div style="position:absolute;left:1158px;top:279.94px;font-size:12px;line-height:12px;color:#2b2b2b;font-weight:400;white-space:nowrap;letter-spacing:-0.45px;-webkit-text-stroke:0.2px currentColor">Link Enabled</div><div style="position:absolute;left:1262.6px;top:279.94px;font-size:12px;line-height:12px;color:#2b2b2b;font-weight:400;white-space:nowrap;letter-spacing:-0.25px;-webkit-text-stroke:0.2px currentColor">Path</div><div style="position:absolute;left:803px;top:299.3px;width:725px;height:18px;background:#efefef"></div><svg style="position:absolute;left:808px;top:300px" width="17" height="16" viewBox="0 0 17 16"><rect x="0.5" y="5" width="5" height="11" fill="#5f95b8"/><rect x="5.5" y="1" width="6" height="15" fill="#79add0"/><rect x="11.5" y="5" width="5" height="11" fill="#5f95b8"/><path d="M1.5 8 H4.5 M1.5 11 H4.5 M6.5 4 H10.5 M6.5 7 H10.5 M6.5 10 H10.5 M12.5 8 H15.5 M12.5 11 H15.5" stroke="#d6e8f4" stroke-width="1"/></svg><div style="position:absolute;left:827.6px;top:301.94px;font-size:12px;line-height:12px;color:#2b2b2b;font-weight:400;white-space:nowrap;letter-spacing:-0.35px;-webkit-text-stroke:0.2px currentColor">fakedomain1.local</div><div style="position:absolute;left:1083.6px;top:302.84px;font-size:12px;line-height:12px;color:#2b2b2b;font-weight:400;white-space:nowrap;letter-spacing:-0.25px;-webkit-text-stroke:0.2px currentColor">No</div><div style="position:absolute;left:1158px;top:302.84px;font-size:12px;line-height:12px;color:#2b2b2b;font-weight:400;white-space:nowrap;letter-spacing:-0.25px;-webkit-text-stroke:0.2px currentColor">Yes</div><div style="position:absolute;left:1262px;top:302.84px;font-size:12px;line-height:12px;color:#2b2b2b;font-weight:400;white-space:nowrap;letter-spacing:-0.35px;-webkit-text-stroke:0.2px currentColor">fakedomain1.local</div><div style="position:absolute;left:796.5px;top:456.5px;width:971px;height:4px;background:#f3f3f3"></div><div style="position:absolute;left:796.5px;top:460.5px;width:972px;height:1.8px;background:#8e8e8e"></div><div style="position:absolute;left:1767px;top:456.5px;width:1.8px;height:5.8px;background:#8e8e8e"></div><div style="position:absolute;left:802px;top:470.74px;font-size:12px;line-height:12px;color:#141414;font-weight:700;white-space:nowrap;letter-spacing:0.3px">Security Filtering</div><div style="position:absolute;left:802.6px;top:491.74px;font-size:12px;line-height:12px;color:#2b2b2b;font-weight:400;white-space:nowrap;letter-spacing:-0.25px;-webkit-text-stroke:0.2px currentColor">The settings in this GPO can only apply to the following groups, users, and computers:</div><div style="position:absolute;left:802px;top:509.3px;width:961px;height:180.1px;background:#ffffff;border:1px solid #828282;box-sizing:border-box"></div><div style="position:absolute;left:1256.5px;top:512px;width:1px;height:25px;background:#e5e5e5"></div><svg style="position:absolute;left:1026px;top:512px" width="10" height="6" viewBox="0 0 10 6"><path d="M1 5 L5 1 L9 5" fill="none" stroke="#9a9a9a" stroke-width="1.1"/></svg><div style="position:absolute;left:810.8px;top:519.14px;font-size:12px;line-height:12px;color:#2b2b2b;font-weight:400;white-space:nowrap;letter-spacing:-0.25px;-webkit-text-stroke:0.2px currentColor">Name</div><div style="position:absolute;left:803px;top:537.6px;width:453.6px;height:17.6px;background:#efefef"></div><svg style="position:absolute;left:809px;top:539px" width="17" height="16" viewBox="0 0 17 16"><circle cx="5.5" cy="4" r="3" fill="#6aa06a"/><path d="M0.5 13 C0.5 8 10.5 8 10.5 13 Z" fill="#6aa06a"/><circle cx="11" cy="7" r="3" fill="#4a8ad0"/><path d="M6 16 C6 11 16 11 16 16 Z" fill="#4a8ad0"/></svg><div style="position:absolute;left:828px;top:541.74px;font-size:12px;line-height:12px;color:#2b2b2b;font-weight:400;white-space:nowrap;letter-spacing:-0.25px;-webkit-text-stroke:0.2px currentColor">Authenticated Users</div><div style="position:absolute;left:803.3px;top:697px;width:118px;height:22px;background:#e1e1e1;border:1px solid #adadad;box-sizing:border-box"></div><div style="position:absolute;left:803.3px;top:702.54px;font-size:12px;line-height:12px;color:#2b2b2b;font-weight:400;white-space:nowrap;width:118px;text-align:center;letter-spacing:-0.25px;-webkit-text-stroke:0.2px currentColor">Add...</div><div style="position:absolute;left:929.7px;top:697px;width:118px;height:22px;background:#e1e1e1;border:1px solid #adadad;box-sizing:border-box"></div><div style="position:absolute;left:929.7px;top:702.54px;font-size:12px;line-height:12px;color:#2b2b2b;font-weight:400;white-space:nowrap;width:118px;text-align:center;letter-spacing:-0.25px;-webkit-text-stroke:0.2px currentColor">Remove</div><div style="position:absolute;left:1056px;top:697px;width:118px;height:22px;background:#cccccc;border:1px solid #c4c4c4;box-sizing:border-box"></div><div style="position:absolute;left:1056px;top:702.54px;font-size:12px;line-height:12px;color:#8a8a8a;font-weight:400;white-space:nowrap;width:118px;text-align:center;letter-spacing:-0.25px">Properties</div><div style="position:absolute;left:796.5px;top:726.5px;width:971px;height:4px;background:#f3f3f3"></div><div style="position:absolute;left:796.5px;top:730.5px;width:972px;height:1.8px;background:#8e8e8e"></div><div style="position:absolute;left:1767px;top:726.5px;width:1.8px;height:5.8px;background:#8e8e8e"></div><div style="position:absolute;left:802px;top:739.94px;font-size:12px;line-height:12px;color:#141414;font-weight:700;white-space:nowrap;letter-spacing:0.5px">WMI Filtering</div><div style="position:absolute;left:806px;top:761.04px;font-size:12px;line-height:12px;color:#2b2b2b;font-weight:400;white-space:nowrap;letter-spacing:-0.25px;-webkit-text-stroke:0.2px currentColor">This GPO is linked to the following WMI filter:</div><div style="position:absolute;left:805px;top:778.7px;width:325.5px;height:22px;background:#e1e1e1;border:1px solid #b4b4b4;box-sizing:border-box"></div><div style="position:absolute;left:809.7px;top:784.44px;font-size:12px;line-height:12px;color:#2b2b2b;font-weight:400;white-space:nowrap;letter-spacing:-0.25px;-webkit-text-stroke:0.2px currentColor">&lt;none&gt;</div><svg style="position:absolute;left:1116px;top:786px" width="11" height="7" viewBox="0 0 11 7"><path d="M1 1 L5.5 5.5 L10 1" fill="none" stroke="#505050" stroke-width="1.4"/></svg><div style="position:absolute;left:1149.5px;top:778.7px;width:79px;height:22px;background:#cccccc;border:1px solid #c4c4c4;box-sizing:border-box"></div><div style="position:absolute;left:1149.5px;top:784.44px;font-size:12px;line-height:12px;color:#8a8a8a;font-weight:400;white-space:nowrap;width:79px;text-align:center;letter-spacing:-0.25px">Open</div><div style="position:absolute;left:343px;top:843px;width:1475px;height:62px;background:#474840"></div><div style="position:absolute;left:343px;top:843px;width:1475px;height:1px;background:#2a2b26"></div><div style="position:absolute;left:343px;top:866px;width:1475px;height:39px;background:#4a4a42"></div><div style="position:absolute;left:343px;top:905px;width:1475px;height:1px;background:#44504c"></div><div style="position:absolute;left:343px;top:906px;width:1475px;height:1px;background:#2a4e74"></div><div style="position:absolute;left:343px;top:907px;width:1475px;height:1px;background:#4e7fb3"></div><div style="position:absolute;left:355.4px;top:851.93px;font-size:10px;line-height:10px;color:#f4f4ee;font-weight:700;white-space:nowrap;">01:36</div><div style="position:absolute;left:393px;top:850px;width:1375px;height:10px;background:#32352e"></div><div style="position:absolute;left:393px;top:850px;width:439px;height:10px;background:#bcd35a"></div><div style="position:absolute;left:824px;top:848px;width:17px;height:17px;background:#1f80c0;border:4px solid #fff;border-radius:50%;box-sizing:border-box;box-shadow:0 0 1.5px 0.5px rgba(0,0,0,0.6)"></div><div style="position:absolute;left:1780px;top:850.33px;font-size:10px;line-height:10px;color:#f4f4ee;font-weight:700;white-space:nowrap;">03:25</div><div style="position:absolute;left:355px;top:874.6px;width:4px;height:25.2px;background:#e6e6de;border-radius:2px"></div><div style="position:absolute;left:366.5px;top:874.6px;width:4.4px;height:25.2px;background:#e6e6de;border-radius:2px"></div><svg style="position:absolute;left:391px;top:874px" width="24" height="26" viewBox="0 0 24 26"><path d="M12 4.5 A9.5 9.5 0 1 1 2.8 12" fill="none" stroke="#e6e6de" stroke-width="2"/><path d="M8 4.5 L13 0.8 L13 8.2 Z" fill="#e6e6de"/><text x="12" y="18.5" font-family="Liberation Sans" font-weight="700" font-size="9.8" letter-spacing="-0.3" fill="#e6e6de" text-anchor="middle">10</text></svg><svg style="position:absolute;left:433px;top:879px" width="20" height="17" viewBox="0 0 20 17"><path d="M0 4.5 H3.5 V12.5 H0 Z M4.5 4.5 L10 0 V17 L4.5 12.5 Z" fill="#e6e6de"/><path d="M12.3 6.8 Q13.3 8.5 12.3 10.2 M15 4.5 Q17.2 8.5 15 12.5 M17.4 2.5 Q20.5 8.5 17.4 14.5" fill="none" stroke="#e6e6de" stroke-width="1.5"/></svg><svg style="position:absolute;left:474px;top:877px" width="18" height="21" viewBox="0 0 18 21"><path d="M0.5 0.5 H12 L17.5 6 V20.5 H0.5 Z" fill="#e6e6de"/><path d="M12 0.5 V6 H17.5" fill="#b5b5ad"/><rect x="2.5" y="9" width="13" height="1.6" fill="#4a4a42"/><rect x="2.5" y="12.5" width="13" height="1.6" fill="#4a4a42"/><rect x="2.5" y="16" width="13" height="1.6" fill="#4a4a42"/></svg><div style="position:absolute;left:503.5px;top:868.5px;width:1px;height:37px;background:#333430"></div><div style="position:absolute;left:1653.5px;top:868.5px;width:1px;height:37px;background:#333430"></div><svg style="position:absolute;left:930px;top:877px" width="22" height="20" viewBox="0 0 22 20"><path d="M10.5 0 L0.5 10 L10.5 20 Z M21 0 L11 10 L21 20 Z" fill="#e6e6de"/></svg><div style="position:absolute;left:961.2px;top:879.85px;font-size:14px;line-height:14px;color:#eeeee6;font-weight:400;white-space:nowrap;-webkit-text-stroke:0.3px currentColor">Previous Topic</div><div style="position:absolute;left:1108.7px;top:879.85px;font-size:14px;line-height:14px;color:#eeeee6;font-weight:400;white-space:nowrap;-webkit-text-stroke:0.3px currentColor">Next Topic</div><svg style="position:absolute;left:1183px;top:877px" width="22" height="20" viewBox="0 0 22 20"><path d="M0.5 0 L10.5 10 L0.5 20 Z M11 0 L21 10 L11 20 Z" fill="#e6e6de"/></svg><svg style="position:absolute;left:1665px;top:876px" width="22" height="22" viewBox="0 0 22 22"><g fill="#e6e6de" transform="translate(11 11)"><circle r="7.6"/><rect x="-1.3" y="-10.2" width="2.6" height="4" rx="0.6" transform="rotate(0)"/><rect x="-1.3" y="-10.2" width="2.6" height="4" rx="0.6" transform="rotate(30)"/><rect x="-1.3" y="-10.2" width="2.6" height="4" rx="0.6" transform="rotate(60)"/><rect x="-1.3" y="-10.2" width="2.6" height="4" rx="0.6" transform="rotate(90)"/><rect x="-1.3" y="-10.2" width="2.6" height="4" rx="0.6" transform="rotate(120)"/><rect x="-1.3" y="-10.2" width="2.6" height="4" rx="0.6" transform="rotate(150)"/><rect x="-1.3" y="-10.2" width="2.6" height="4" rx="0.6" transform="rotate(180)"/><rect x="-1.3" y="-10.2" width="2.6" height="4" rx="0.6" transform="rotate(210)"/><rect x="-1.3" y="-10.2" width="2.6" height="4" rx="0.6" transform="rotate(240)"/><rect x="-1.3" y="-10.2" width="2.6" height="4" rx="0.6" transform="rotate(270)"/><rect x="-1.3" y="-10.2" width="2.6" height="4" rx="0.6" transform="rotate(300)"/><rect x="-1.3" y="-10.2" width="2.6" height="4" rx="0.6" transform="rotate(330)"/></g><circle cx="11" cy="11" r="3" fill="#4a4a42"/></svg><div style="position:absolute;left:1706px;top:877px;width:20px;height:20px;background:#e6e6de;border-radius:3px"></div><div style="position:absolute;left:1706px;top:882.19px;font-size:11px;line-height:11px;color:#4a4a42;font-weight:700;white-space:nowrap;width:20px;text-align:center;letter-spacing:-0.3px">CC</div><div style="position:absolute;left:1746px;top:877px;width:20px;height:20px;background:#e6e6de;border-radius:3px"></div><div style="position:absolute;left:1746px;top:882.19px;font-size:11px;line-height:11px;color:#4a4a42;font-weight:700;white-space:nowrap;width:20px;text-align:center;letter-spacing:-0.3px">AD</div><svg style="position:absolute;left:1786px;top:877px" width="21" height="21" viewBox="0 0 21 21"><path d="M1.2 7 V3 Q1.2 1.2 3 1.2 H7 M14 1.2 H18 Q19.8 1.2 19.8 3 V7 M19.8 14 V18 Q19.8 19.8 18 19.8 H14 M7 19.8 H3 Q1.2 19.8 1.2 18 V14" fill="none" stroke="#e6e6de" stroke-width="2.2"/><rect x="5.2" y="5.2" width="10.6" height="10.6" rx="1.8" fill="#e6e6de"/></svg>
</div>
</body></html>
